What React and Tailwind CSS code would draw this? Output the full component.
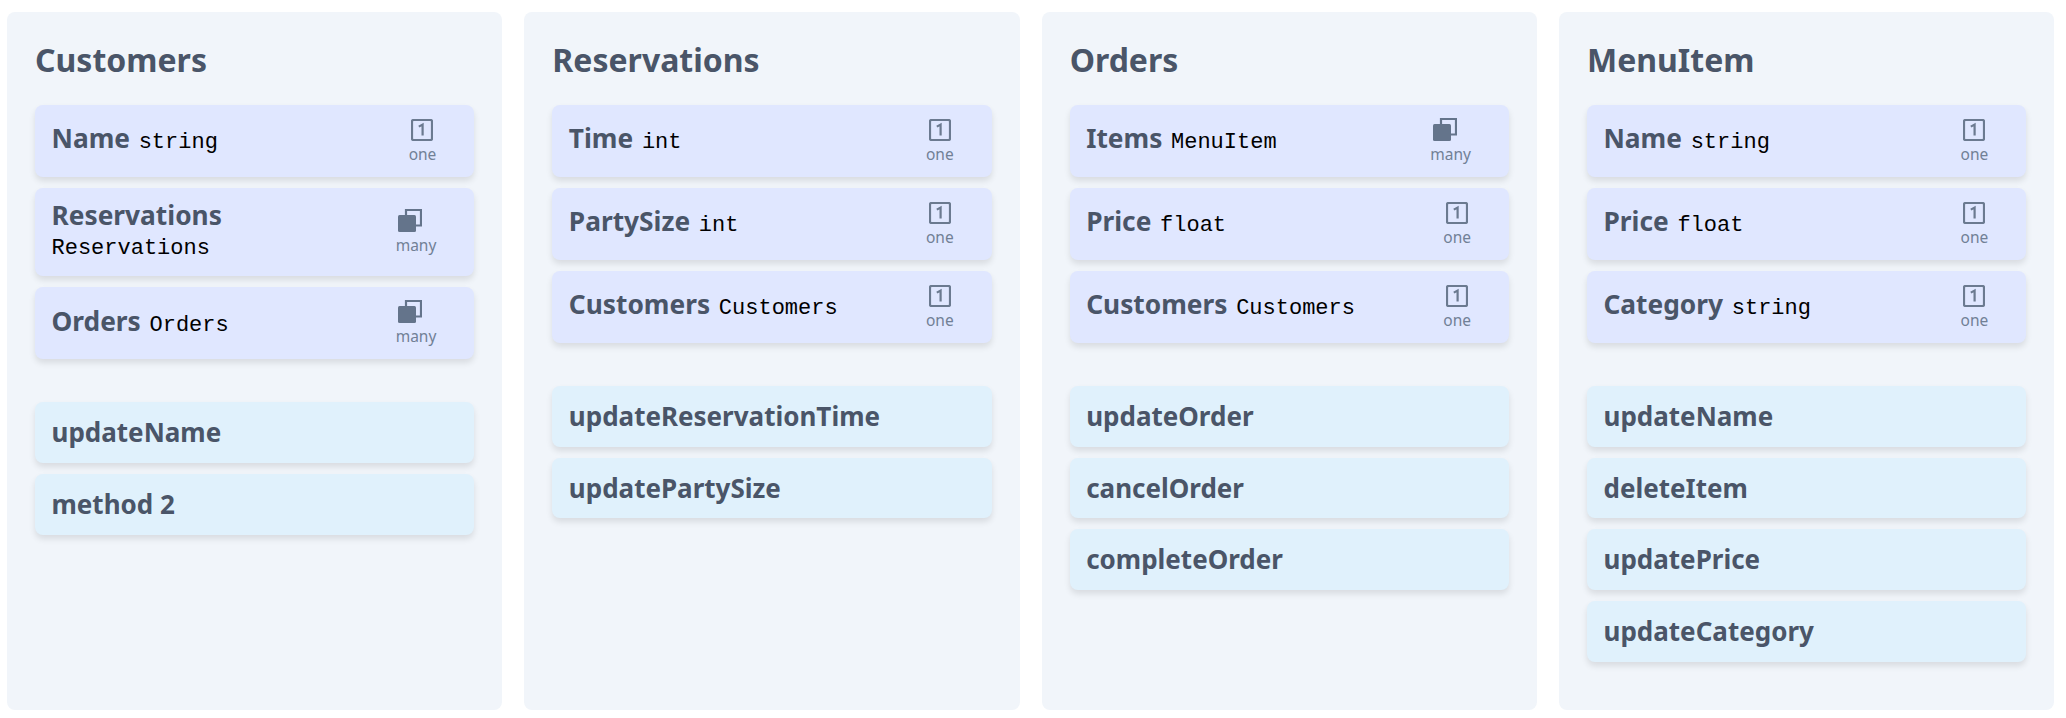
const classes = [
  {
    name: 'Customers',
    attrs: [
      { name: 'Name', type: 'string', rel: 'one' },
      { name: 'Reservations', type: 'Reservations', rel: 'many' },
      { name: 'Orders', type: 'Orders', rel: 'many' },
    ],
    methods: ['updateName', 'method 2'],
  },
  {
    name: 'Reservations',
    attrs: [
      { name: 'Time', type: 'int', rel: 'one' },
      { name: 'PartySize', type: 'int', rel: 'one' },
      { name: 'Customers', type: 'Customers', rel: 'one' },
    ],
    methods: ['updateReservationTime', 'updatePartySize'],
  },
  {
    name: 'Orders',
    attrs: [
      { name: 'Items', type: 'MenuItem', rel: 'many' },
      { name: 'Price', type: 'float', rel: 'one' },
      { name: 'Customers', type: 'Customers', rel: 'one' },
    ],
    methods: ['updateOrder', 'cancelOrder', 'completeOrder'],
  },
  {
    name: 'MenuItem',
    attrs: [
      { name: 'Name', type: 'string', rel: 'one' },
      { name: 'Price', type: 'float', rel: 'one' },
      { name: 'Category', type: 'string', rel: 'one' },
    ],
    methods: ['updateName', 'deleteItem', 'updatePrice', 'updateCategory'],
  },
];

const OneIcon = () => (
  <svg width="22" height="22" viewBox="0 0 22 22" fill="none" className="block text-[#6b7a90]">
    <rect x="1" y="1" width="20" height="20" rx="1.5" stroke="currentColor" strokeWidth="2.2" />
    <path d="M7.8 7.6 11.6 5.6V16.5" stroke="currentColor" strokeWidth="2.2" />
  </svg>
);

const ManyIcon = () => (
  <svg width="24" height="23" viewBox="0 0 24 23" fill="none" className="mr-[12px] block text-[#64748b]">
    <path d="M8 6V1h15v15.5h-5" stroke="currentColor" strokeWidth="2.2" />
    <rect x="0" y="6" width="18" height="17" rx="1.5" fill="currentColor" />
  </svg>
);

const Attribute = ({ attr }) => (
  <div className="flex items-center justify-between rounded-lg bg-[#e0e7ff] py-[12.5px] pl-[16.5px] pr-[38px] shadow-[0_4px_6px_rgba(0,0,0,0.1)]">
    <div className="w-[335px] leading-[29.7px]">
      <span className="mr-[4.5px] text-[26.3px] font-bold text-[#4a5568]">{attr.name}</span>{' '}
      <span className="font-['Liberation_Mono',monospace] text-[22px] text-black">{attr.type}</span>
    </div>
    <div className="flex h-[47px] flex-col items-center justify-center">
      {attr.rel === 'one' ? <OneIcon /> : <ManyIcon />}
      <span className="mt-[3px] text-[15.5px] leading-[20px] text-[#718096]">{attr.rel}</span>
    </div>
  </div>
);

const Method = ({ name }) => (
  <div className="rounded-lg bg-[#e0f1fc] px-[16.5px] py-[12px] text-[26px] font-bold leading-[36.7px] text-[#4a5568] shadow-[0_4px_6px_rgba(0,0,0,0.1)]">
    {name}
  </div>
);

const ClassCard = ({ item }) => (
  <div className="h-[698px] w-[495.33px] rounded-lg bg-[#f1f5fa] px-[28px] pt-[24px]">
    <h2 className="mb-[21px] text-[32px] font-bold leading-[48px] text-[#4a5568]">{item.name}</h2>
    <div className="flex flex-col gap-[11px]">
      {item.attrs.map((attr) => (
        <Attribute key={attr.name} attr={attr} />
      ))}
    </div>
    <div className="mt-[43px] flex flex-col gap-[11px]">
      {item.methods.map((name) => (
        <Method key={name} name={name} />
      ))}
    </div>
  </div>
);

export default function App() {
  return (
    <div className="flex min-h-screen gap-[22px] bg-white pl-[7px] pt-[12px] font-['Noto_Sans',sans-serif]">
      {classes.map((item) => (
        <ClassCard key={item.name} item={item} />
      ))}
    </div>
  );
}
